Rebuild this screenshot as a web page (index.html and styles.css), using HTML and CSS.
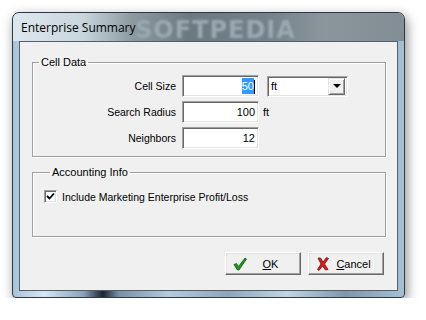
FILE: index.html
```html
<!DOCTYPE html>
<html lang="en">

<head>
    <meta charset="UTF-8">
    <title>Enterprise Summary</title>
    <link rel="stylesheet" href="styles.css">
</head>

<body>
    <div class="window">
        <!--标题栏-->
        <div class="titlebar">
            <span class="title">Enterprise Summary</span>
            <span class="mark">SOFTPEDIA</span>
        </div>
        <div class="client">
            <fieldset class="group cell">
                <legend>Cell Data</legend>
                <div class="rows">
                    <label>Cell Size</label>
                    <div class="edit"><span class="sel">50</span><span class="caret"></span></div>
                    <div class="combo">
                        <span class="combo-text">ft</span>
                        <span class="drop"><i></i></span>
                    </div>

                    <label>Search Radius</label>
                    <div class="edit">100</div>
                    <span class="unit">ft</span>

                    <label>Neighbors</label>
                    <div class="edit">12</div>
                    <span></span>
                </div>
            </fieldset>

            <fieldset class="group acct">
                <legend>Accounting Info</legend>
                <div class="check-row">
                    <span class="check">
                        <svg width="9" height="9" viewBox="0 0 9 9">
                            <path d="M1 4 L3.5 6.5 L8 1.5" fill="none" stroke="#000" stroke-width="1.8"/>
                        </svg>
                    </span>
                    <span>Include Marketing Enterprise Profit/Loss</span>
                </div>
            </fieldset>

            <div class="buttons">
                <div class="btn">
                    <svg class="ico" width="14" height="14" viewBox="0 0 14 14">
                        <path d="M1 7.5 L3.5 6.5 L5.5 9.5 L12 1 L13.5 2 L6 13 L4.5 13 Z" fill="#1f9a1f" stroke="#0d5a0d" stroke-width="0.8"/>
                    </svg>
                    <span class="cap"><u>O</u>K</span>
                </div>
                <div class="btn">
                    <svg class="ico" width="14" height="14" viewBox="0 0 14 14">
                        <path d="M2 1 L4.5 1 L7 5 L10.5 0.5 L12.5 1.5 L8.5 7 L12 12.5 L9.5 13 L6.5 9 L3 13.5 L1.5 12.5 L5 7 Z" fill="#d42020" stroke="#7a0d0d" stroke-width="0.8"/>
                    </svg>
                    <span class="cap"><u>C</u>ancel</span>
                </div>
            </div>
        </div>
    </div>
</body>

</html>
```

FILE: styles.css
```css
* {
    margin: 0;
    padding: 0;
    box-sizing: border-box;
}

body {
    background: #fff;
    padding: 12px 0 0 12px;
    font-family: "Liberation Sans", Arial, sans-serif;
    font-size: 10.5px;
    color: #000;
}

.window {
    width: 393px;
    height: 286px;
    border: 1px solid #2e3a44;
    border-radius: 7px 7px 4px 4px;
    background: linear-gradient(to right, #a9c2d8 0%, #d7e6f2 8%, #8aa2b8 18%, #1c252d 23%, #7790a6 27%, #b6cbdc 40%, #8ea6ba 55%, #c2d5e4 70%, #7f97ab 85%, #a7bfd2 100%);
    box-shadow: 2px 4px 12px rgba(0, 0, 0, 0.45);
    padding: 0 6px 6px 6px;
    display: flex;
    flex-direction: column;
    overflow: hidden;
}

.titlebar {
    height: 28px;
    margin: 0 -6px;
    padding-left: 8px;
    display: flex;
    align-items: center;
    position: relative;
    background: linear-gradient(to right, #dde7ee 0%, #c9d5dd 18%, #8e9ba3 30%, #6c7981 45%, #74818a 65%, #8b969c 80%, #828e94 100%);
    border-radius: 6px 6px 0 0;
}

.title {
    font-family: "Open Sans", "Noto Sans", sans-serif;
    font-size: 12px;
    color: #000;
    position: relative;
    z-index: 1;
}

.mark {
    position: absolute;
    left: 122px;
    top: 3px;
    font-family: "DejaVu Sans", sans-serif;
    font-weight: bold;
    font-size: 24px;
    letter-spacing: 1px;
    color: #9aa8b1;
    filter: blur(1.2px);
}

.client {
    flex: 1;
    background: #f0f0f0;
    border: 1px solid #4f5f6c;
    padding: 14px 11px 0 12px;
    display: flex;
    flex-direction: column;
}

.group {
    border: 1px solid #a0a0a0;
    box-shadow: 1px 1px 0 #fff, inset 1px 1px 0 #fff;
}

.group legend {
    margin-left: 6px;
    padding: 0 2px;
    line-height: 13px;
    font-size: 11px;
}

.cell {
    height: 101px;
    padding: 6px 0 0 0;
}

.rows {
    display: grid;
    grid-template-columns: 143px 77px 82px;
    column-gap: 6px;
    row-gap: 4px;
    align-items: center;
}

.rows label {
    text-align: right;
}

.edit {
    height: 22px;
    background: #fff;
    border: 1px solid;
    border-color: #a0a0a0 #fff #fff #a0a0a0;
    box-shadow: inset 1px 1px 0 #696969, inset -1px -1px 0 #e3e3e3;
    text-align: right;
    padding: 0 3px;
    font-size: 11px;
    line-height: 20px;
}

.sel {
    background: #3399ff;
    color: #fff;
    padding: 2px 0;
}

.caret {
    display: inline-block;
    width: 1px;
    height: 14px;
    background: #000;
    vertical-align: middle;
}

.combo {
    margin-left: 2px;
    width: 81px;
    height: 21px;
    background: #fff;
    border: 1px solid;
    border-color: #a0a0a0 #fff #fff #a0a0a0;
    box-shadow: inset 1px 1px 0 #696969, inset -1px -1px 0 #e3e3e3;
    display: flex;
    align-items: center;
    padding: 2px;
}

.combo-text {
    flex: 1;
    padding-left: 1px;
    font-size: 11px;
}

.drop {
    width: 17px;
    height: 17px;
    background: #f0f0f0;
    border: 1px solid;
    border-color: #e3e3e3 #696969 #696969 #e3e3e3;
    box-shadow: inset 1px 1px 0 #fff, inset -1px -1px 0 #a0a0a0;
    display: flex;
    align-items: center;
    justify-content: center;
}

.drop i {
    width: 0;
    height: 0;
    border-left: 4px solid transparent;
    border-right: 4px solid transparent;
    border-top: 4px solid #000;
}

.unit {
    margin-left: -2px;
    font-size: 11px;
}

.acct {
    margin-top: 9px;
    height: 71px;
    padding: 11px 0 0 11px;
}

.check-row {
    display: flex;
    align-items: center;
    gap: 5px;
}

.check {
    width: 13px;
    height: 13px;
    background: #fff;
    border: 1px solid;
    border-color: #a0a0a0 #fff #fff #a0a0a0;
    box-shadow: inset 1px 1px 0 #696969, inset -1px -1px 0 #e3e3e3;
    display: flex;
    align-items: center;
    justify-content: center;
}

.buttons {
    margin-top: 15px;
    display: flex;
    justify-content: flex-end;
    gap: 7px;
    padding-right: 2px;
}

.btn {
    width: 76px;
    height: 23px;
    background: #f0f0f0;
    border: 1px solid;
    border-color: #fff #696969 #696969 #fff;
    box-shadow: inset -1px -1px 0 #a0a0a0, inset 1px 1px 0 #e3e3e3;
    display: flex;
    align-items: center;
    padding-left: 7px;
    font-size: 11px;
}

.ico {
    flex: none;
}

.cap {
    flex: 1;
    text-align: center;
    padding-right: 6px;
}
```
